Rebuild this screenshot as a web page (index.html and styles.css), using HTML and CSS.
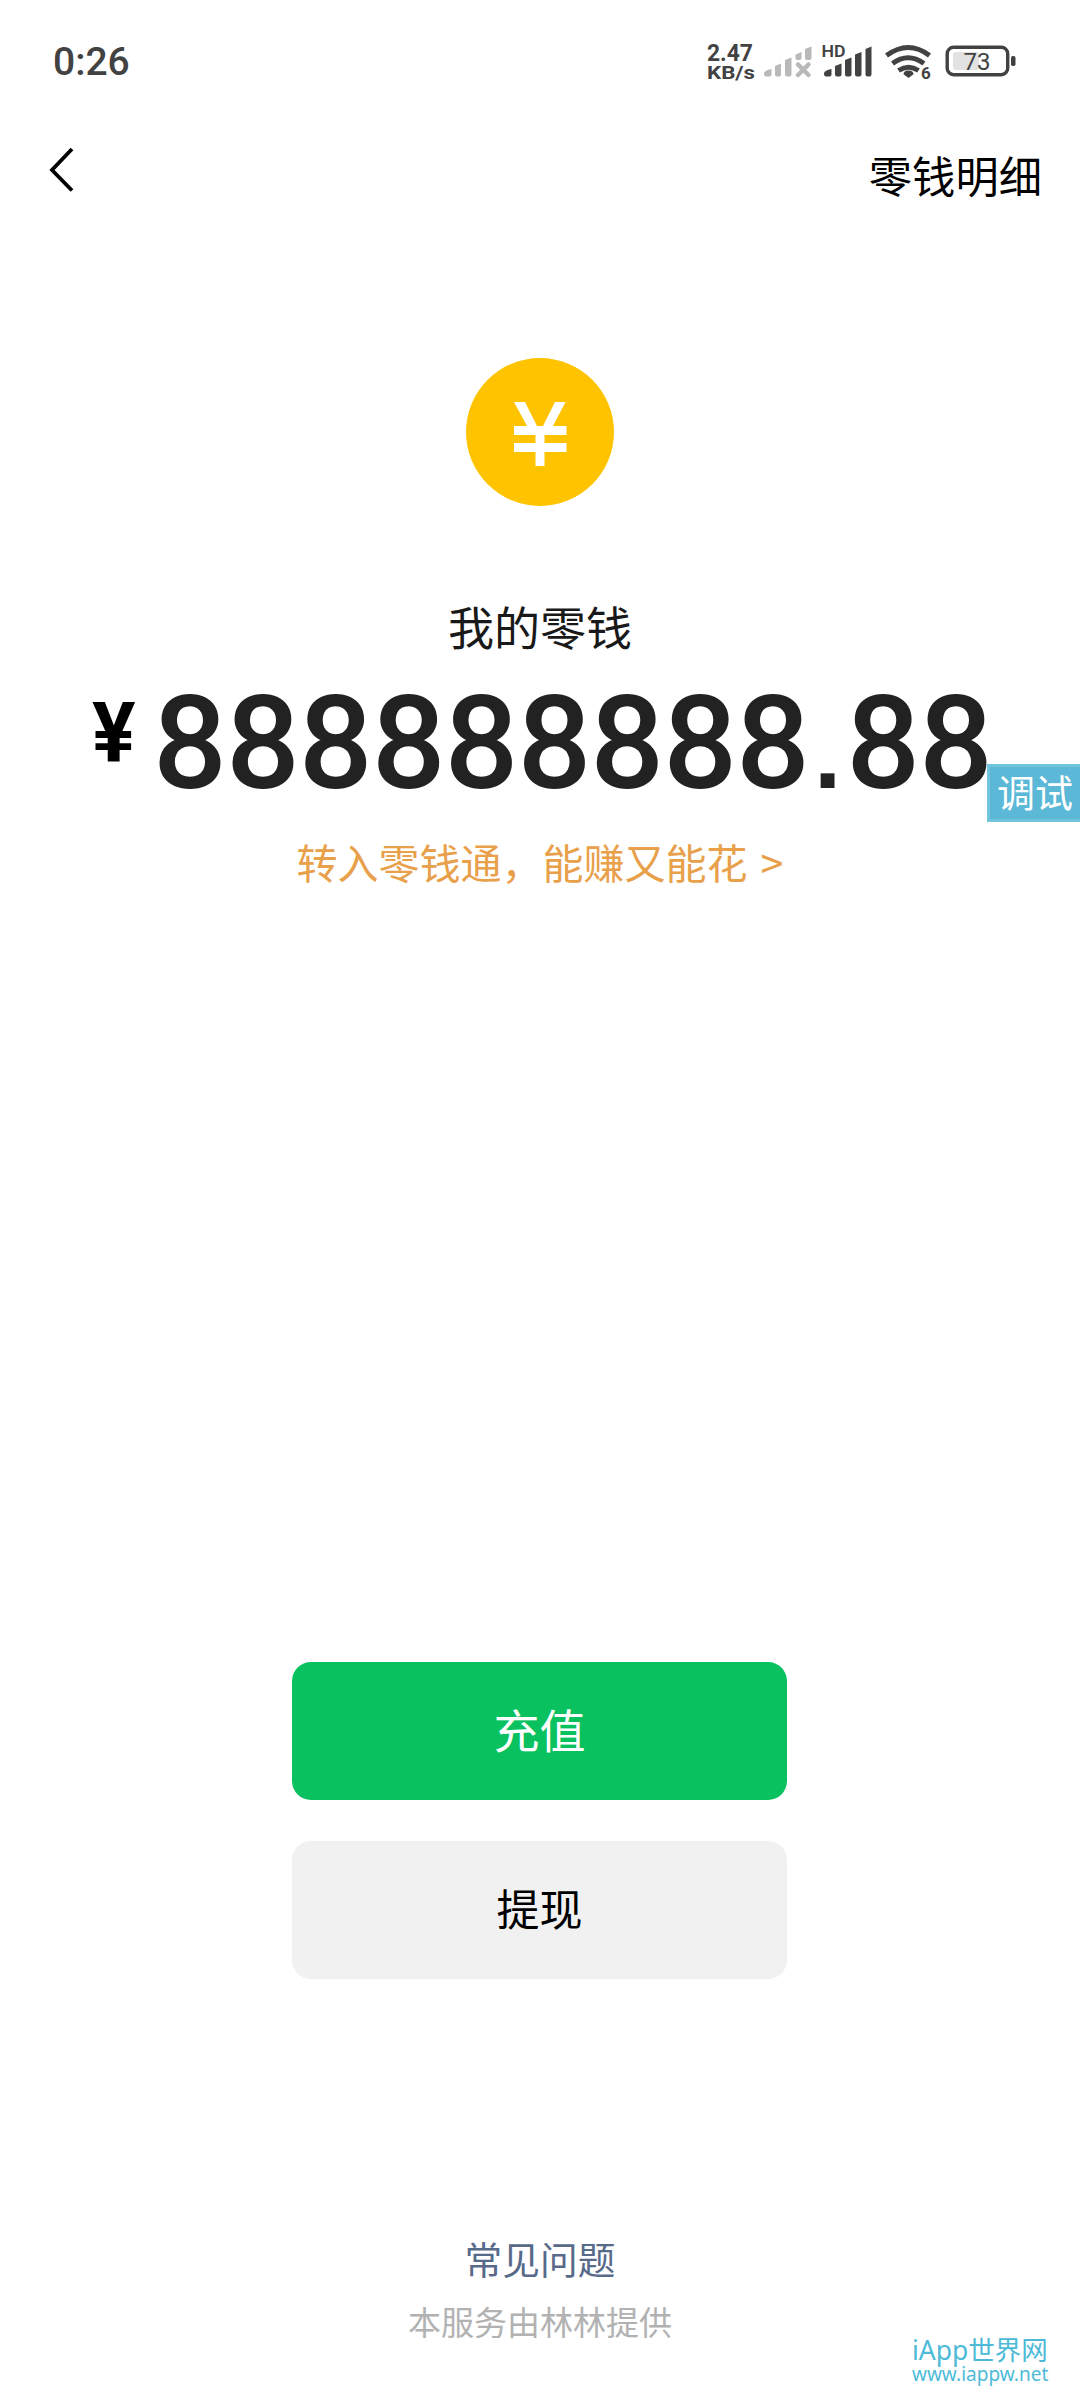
FILE: index.html
```html
<!DOCTYPE html>
<html lang="zh-CN">
<head>
<meta charset="utf-8">
<title>我的零钱</title>
<link rel="stylesheet" href="styles.css">
</head>
<body>
<div class="status">
  <span class="clock">0:26</span>
  <svg class="status-icons" width="320" height="40" viewBox="700 42 320 40">
    <g class="status-text">
      <text x="707" y="61" font-size="23" font-weight="700" textLength="46" lengthAdjust="spacingAndGlyphs">2.47</text>
      <text x="707" y="78.500" font-size="19" font-weight="700" textLength="48" lengthAdjust="spacingAndGlyphs">KB/s</text>
      <text x="821.500" y="57" font-size="16" font-weight="600" textLength="24" lengthAdjust="spacingAndGlyphs">HD</text>
      <text x="921" y="79" font-size="17" font-weight="700">6</text>
    </g>
    <g fill="#b9b9b9">
      <path d="M764 73.500q0-3 7.500-4.500v5.500q0 2-2 2h-3.500q-2 0-2-3zM775 66l6-2.500v11q0 2-2 2h-2q-2 0-2-2zM785 60l6.500-2.500v17q0 2-2 2h-2.500q-2 0-2-2zM795.500 54.500l6-2.500v6q0 2-2 2h-2q-2 0-2-2zM805 49l6.500-2.500v11.500q0 2-2 2h-2.500q-2 0-2-2z"/>
      <path d="M798 64.500l10.500 10.500M808.500 64.500L798 75" fill="none" stroke="#b9b9b9" stroke-width="4.500" stroke-linecap="round"/>
    </g>
    <g fill="#424242">
      <path d="M824 73.500q0-3 7.500-4.500v5.500q0 2-2 2h-3.500q-2 0-2-3zM835 66l6.500-2.500v11q0 2-2 2h-2.500q-2 0-2-2zM845 60l6.500-2.500v17q0 2-2 2h-2.500q-2 0-2-2zM855 54.500l6.500-2.500v22.500q0 2-2 2h-2.500q-2 0-2-2zM865.500 49l6-2.500v28q0 2-2 2h-2q-2 0-2-2z"/>
      <path d="M908.500 78l-5-3.800q0-3.800 5-3.800t5 3.800z"/>
    </g>
    <g fill="none" stroke="#424242" stroke-width="5">
      <path d="M886.500 55.500q22-16 43 0M892.500 63.500q15.500-11.500 31.500 0M898.500 70.500q10-6.500 20 0"/>
    </g>
    <rect x="953" y="52" width="26" height="18" rx="3" fill="#e2e2e2"/>
    <text class="status-text" x="963.500" y="69.500" font-size="23.500" textLength="27" lengthAdjust="spacingAndGlyphs">73</text>
    <rect x="947.200" y="47.200" width="60.500" height="27.500" rx="6.500" fill="none" stroke="#424242" stroke-width="3.400"/>
    <rect x="1011" y="56" width="4.500" height="10" rx="1.800" fill="#424242"/>
  </svg>
</div>
<header class="topbar">
  <svg width="28" height="48" viewBox="0 0 28 48"><path d="M24 4L4 25l20 20.500" fill="none" stroke="#000" stroke-width="3.800"/></svg>
  <span class="detail">零钱明细</span>
</header>
<main>
  <svg class="coin" width="148" height="148" viewBox="0 0 148 148">
    <circle cx="74" cy="74" r="74" fill="#ffc300"/>
    <path fill="#fff" d="M48 44h11l12 24h6l12-24h10.500L87 68h13.500v9H78.500v8h22v9h-22v14h-9V94H48v-9h21.500v-8H48v-9h13z"/>
  </svg>
  <h1 class="title">我的零钱</h1>
  <div class="balance"><span class="yen">¥</span><span class="amount">888888888<span class="point">.</span>88</span><span class="debug">调试</span></div>
  <div class="promo">转入零钱通，能赚又能花<span class="more">&gt;</span></div>
</main>
<div class="actions">
  <button class="btn recharge">充值</button>
  <button class="btn withdraw">提现</button>
</div>
<footer>
  <div class="faq">常见问题</div>
  <div class="provider">本服务由林林提供</div>
  <div class="mark"><span class="mark-name">iApp世界网</span><span class="mark-url">www.iappw.net</span></div>
</footer>
</body>
</html>
```

FILE: styles.css
```css
* { box-sizing: border-box; }
body {
  margin: 0;
  width: 1080px;
  height: 2400px;
  overflow: hidden;
  display: flex;
  flex-direction: column;
  background: #fff;
  color: #000;
  font-family: "Noto Sans CJK SC", sans-serif;
}
.status {
  height: 122px;
  padding: 42px 60px 0 53px;
  display: flex;
  justify-content: space-between;
}
.clock {
  font: 500 39px/40px Roboto, sans-serif;
  color: #424242;
}
.status-icons { overflow: visible; }
.status-text { font-family: Roboto, sans-serif; fill: #424242; }
.topbar {
  height: 104px;
  padding: 0 38px 0 48px;
  display: flex;
  align-items: center;
  justify-content: space-between;
}
.topbar svg { margin-top: -10px; }
.detail { font-size: 43.300px; line-height: 60px; margin-top: -1px; }
main {
  height: 1436px;
  padding-top: 132px;
  display: flex;
  flex-direction: column;
  align-items: center;
}
.coin { display: block; }
.title {
  margin: 89px 0 0;
  font-size: 46px;
  line-height: 60px;
  font-weight: 400;
  color: #191919;
}
.balance {
  position: relative;
  width: 1080px;
  height: 176px;
  padding-left: 92px;
  display: flex;
}
.yen {
  width: 61px;
  margin-top: 31px;
  font: 700 83px/96px Roboto, sans-serif;
  transform: scaleX(.98);
  transform-origin: left;
}
.amount {
  margin-top: 24px;
  font: 500 130px/130px Roboto, sans-serif;
  letter-spacing: -1px;
  color: #222;
}
.point {
  margin: 0 6px 0 5px;
  font: 700 98px/98px "Liberation Sans", sans-serif;
}
.debug {
  position: absolute;
  left: 987px;
  top: 109px;
  width: 96px;
  height: 58px;
  padding-left: 7px;
  border: 3px solid #6ec5dc;
  background: #5bb8d6;
  color: #fff;
  font-size: 38px;
  line-height: 48px;
  white-space: nowrap;
}
.promo {
  font-size: 41px;
  line-height: 60px;
  color: #e8a04a;
}
.more { margin-left: 13px; }
.actions {
  height: 317px;
  padding-right: 1px;
  display: flex;
  flex-direction: column;
  align-items: center;
  gap: 41px;
}
.btn {
  width: 495px;
  height: 138px;
  padding: 0 0 6px;
  border: 0;
  border-radius: 19px;
  font-family: inherit;
}
.recharge { background: #0ac160; color: #fff; font-size: 46px; }
.withdraw { background: #f1f1f1; color: #000; font-size: 43px; }
footer {
  padding-top: 249px;
  display: flex;
  flex-direction: column;
  align-items: center;
}
.faq { font-size: 37.700px; line-height: 60px; color: #586a8a; }
.provider { font-size: 33px; line-height: 40px; margin-top: 13px; color: #b2b2b2; }
.mark {
  align-self: flex-end;
  margin-right: 31px;
  margin-top: -4px;
  width: 137px;
  display: flex;
  flex-direction: column;
  color: #4dbbd8;
  white-space: nowrap;
}
.mark-name { font: 26.500px/26px "Noto Sans", "Noto Sans CJK SC", sans-serif; }
.mark-url { font: 19px/22px "Noto Sans", sans-serif; }
```
